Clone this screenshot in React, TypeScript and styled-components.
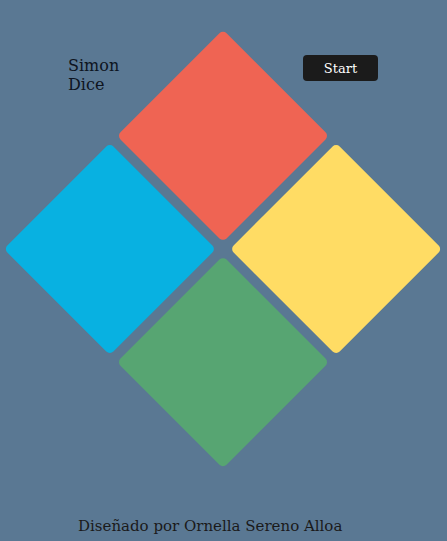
import React from "react";
import styled, { createGlobalStyle } from "styled-components";

const GlobalStyle = createGlobalStyle`
  html, body {
    margin: 0;
    padding: 0;
    background: #5a7893;
  }
  body {
    font-family: "DejaVu Serif", "Liberation Serif", serif;
    overflow: hidden;
  }
`;

const Page = styled.div`
  width: 310px;
  margin: 0 0 0 68px;
  min-height: 541px;
  display: flex;
  flex-direction: column;
`;

const Header = styled.header`
  display: flex;
  justify-content: space-between;
  align-items: flex-start;
  padding-top: 56px;
  height: 38px;
  position: relative;
  z-index: 2;
`;

const Title = styled.h1`
  margin: 0;
  width: 60px;
  font-size: 16px;
  line-height: 19px;
  font-weight: 400;
  color: #0e1420;
`;

const StartButton = styled.button`
  width: 75px;
  height: 26px;
  margin-top: -1px;
  border: none;
  border-radius: 4px;
  background: #1b1b1b;
  color: #ffffff;
  font-family: "DejaVu Serif", "Liberation Serif", serif;
  font-size: 13px;
  padding: 0;
  cursor: pointer;
`;

const Board = styled.div`
  width: 310px;
  height: 310px;
  display: grid;
  grid-template-columns: 150px 150px;
  grid-template-rows: 150px 150px;
  gap: 10px;
  transform: rotate(45deg);
`;

const Pad = styled.div<{ $color: string }>`
  background: ${(p) => p.$color};
  border-radius: 5px;
`;

const Footer = styled.footer`
  margin-top: 112px;
  padding-left: 10px;
  font-size: 15px;
  line-height: 20px;
  color: #1a1a1a;
  white-space: nowrap;
`;

export default function App() {
  return (
    <>
      <GlobalStyle />
      <Page>
        <Header>
          <Title>Simon Dice</Title>
          <StartButton>Start</StartButton>
        </Header>
        <Board>
          <Pad $color="#ef6453" />
          <Pad $color="#ffdc64" />
          <Pad $color="#08b1e1" />
          <Pad $color="#57a572" />
        </Board>
        <Footer>Diseñado por Ornella Sereno Alloa</Footer>
      </Page>
    </>
  );
}
